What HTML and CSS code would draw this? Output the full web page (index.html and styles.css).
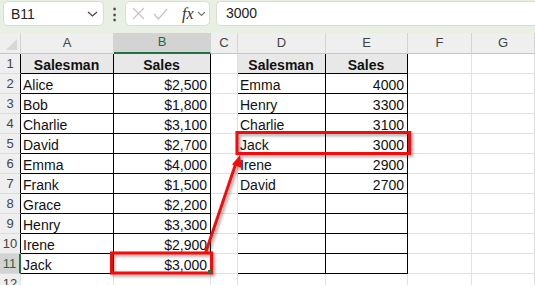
FILE: index.html
```html
<!DOCTYPE html>
<html>
<head>
<title>Sheet</title>
<link rel="stylesheet" href="styles.css">
</head>
<body>
<div class='app'>
  <div class='fbar'>
    <div class='namebox'>
      <span>B11</span>
      <svg class='chev' width='11' height='6' viewBox='0 0 11 6'><path d='M1 1l4.5 4 4.5-4' fill='none' stroke='#444' stroke-width='1.2'/></svg>
    </div>
    <div class='dots'>&#8942;</div>
    <div class='fxbox'>
      <svg width='13' height='13' viewBox='0 0 13 13'><path d='M1 1l11 11M12 1L1 12' stroke='#c4c4c4' stroke-width='1.2' fill='none'/></svg>
      <svg width='15' height='12' viewBox='0 0 15 12'><path d='M1 6l4.5 5L14 1' stroke='#c4c4c4' stroke-width='1.2' fill='none'/></svg>
      <span class='fx'>fx</span>
      <svg width='9' height='6' viewBox='0 0 9 6'><path d='M1 1l3.5 3.5L8 1' fill='none' stroke='#777' stroke-width='1.1'/></svg>
    </div>
    <div class='finput'>3000</div>
  </div>

  <table class='sheet'>
    <colgroup>
      <col style='width:21px'><col style='width:93px'><col style='width:97px'><col style='width:27px'>
      <col style='width:88px'><col style='width:82px'><col style='width:64px'><col style='width:63px'>
    </colgroup>
    <tr class='colhdr'>
      <th class='corner'><span class='tri'></span></th><th>A</th><th class='sel'>B</th><th>C</th><th>D</th><th>E</th><th>F</th><th>G</th>
    </tr>
    <tr>
      <th class='rh kr'>1</th><td class='k hd'>Salesman</td><td class='k hd'>Sales</td><td class='kr'></td><td class='k hd'>Salesman</td><td class='k hd'>Sales</td><td></td><td></td>
    </tr>
    <tr>
      <th class='rh kr'>2</th><td class='k'>Alice</td><td class='k num'>$2,500</td><td class='kr'></td><td class='k'>Emma</td><td class='k num'>4000</td><td></td><td></td>
    </tr>
    <tr>
      <th class='rh kr'>3</th><td class='k'>Bob</td><td class='k num'>$1,800</td><td class='kr'></td><td class='k'>Henry</td><td class='k num'>3300</td><td></td><td></td>
    </tr>
    <tr>
      <th class='rh kr'>4</th><td class='k'>Charlie</td><td class='k num'>$3,100</td><td class='kr'></td><td class='k'>Charlie</td><td class='k num'>3100</td><td></td><td></td>
    </tr>
    <tr>
      <th class='rh kr'>5</th><td class='k'>David</td><td class='k num'>$2,700</td><td class='kr'></td><td class='k'>Jack</td><td class='k num'>3000</td><td></td><td></td>
    </tr>
    <tr>
      <th class='rh kr'>6</th><td class='k'>Emma</td><td class='k num'>$4,000</td><td class='kr'></td><td class='k'>Irene</td><td class='k num'>2900</td><td></td><td></td>
    </tr>
    <tr>
      <th class='rh kr'>7</th><td class='k'>Frank</td><td class='k num'>$1,500</td><td class='kr'></td><td class='k'>David</td><td class='k num'>2700</td><td></td><td></td>
    </tr>
    <tr>
      <th class='rh kr'>8</th><td class='k'>Grace</td><td class='k num'>$2,200</td><td class='kr'></td><td class='k'></td><td class='k'></td><td></td><td></td>
    </tr>
    <tr>
      <th class='rh kr'>9</th><td class='k'>Henry</td><td class='k num'>$3,300</td><td class='kr'></td><td class='k'></td><td class='k'></td><td></td><td></td>
    </tr>
    <tr>
      <th class='rh kr'>10</th><td class='k'>Irene</td><td class='k num'>$2,900</td><td class='kr'></td><td class='k'></td><td class='k'></td><td></td><td></td>
    </tr>
    <tr>
      <th class='rh rsel'>11</th><td class='k'>Jack</td><td class='k num'>$3,000</td><td class='kr'></td><td class='k'></td><td class='k'></td><td></td><td></td>
    </tr>
    <tr>
      <th class='rh'>12</th><td></td><td></td><td></td><td></td><td></td><td></td><td></td>
    </tr>
  </table>

  <!-- callout boxes and arrow drawn over the grid -->
  <svg class='marks' width='535' height='285' viewBox='0 0 535 285'>
    <defs>
      <filter id='sh' x='-10%' y='-10%' width='130%' height='140%'>
        <feDropShadow dx='2' dy='2' stdDeviation='1.5' flood-color='#000' flood-opacity='0.35'/>
      </filter>
    </defs>
    <g filter='url(#sh)' fill='none' stroke='#f20d0d' stroke-width='3'>
      <rect x='111.5' y='253' width='100' height='20'/>
      <rect x='237' y='132.5' width='172.5' height='21'/>
      <path d='M205.5 253L236 163'/>
      <path d='M240 155l2 13-10-3.5z' fill='#f20d0d' stroke='none'/>
    </g>
    <rect x='208' y='270' width='3' height='3' fill='#217346'/>
  </svg>
</div>
</body>
</html>
```

FILE: styles.css
```css
*, body {
  margin: 0;
  padding: 0;
  box-sizing: border-box;
}
body {
  font-family: "Liberation Sans", Arial, sans-serif;
  background: #fff;
}
.app {
  position: relative;
  width: 535px;
  height: 285px;
  overflow: hidden;
}
.fbar {
  display: flex;
  align-items: flex-start;
  height: 33px;
  padding: 1px 0 0 3px;
  background: #e8efe3;
}
.namebox {
  display: flex;
  align-items: center;
  justify-content: space-between;
  width: 101px;
  height: 25px;
  padding: 0 5px 0 7px;
  background: #fff;
  border: 1px solid #d9ddd6;
  border-radius: 5px;
  font-size: 14px;
  color: #222;
}
.chev {
  margin-top: 1px;
}
.dots {
  width: 21px;
  text-align: center;
  font-size: 15px;
  font-weight: bold;
  line-height: 25px;
  color: #444;
}
.fxbox {
  display: flex;
  align-items: center;
  gap: 8px;
  width: 85px;
  height: 25px;
  padding: 0 3px 0 6px;
  background: #fff;
  border: 1px solid #d9ddd6;
  border-radius: 5px;
}
.fx {
  font-family: "Liberation Serif", serif;
  font-style: italic;
  font-size: 16px;
  color: #333;
  margin-left: 6px;
  margin-right: -5px;
}
.finput {
  flex: 1;
  height: 25px;
  margin-left: 6px;
  padding-left: 9px;
  background: #fff;
  border: 1px solid #d9ddd6;
  border-right: none;
  border-radius: 5px 0 0 5px;
  font-size: 14px;
  line-height: 23px;
  color: #222;
}
.sheet {
  border-collapse: separate;
  border-spacing: 0;
  table-layout: fixed;
  width: 535px;
  font-size: 14px;
  color: #111;
}
.sheet td, .sheet th {
  height: 20px;
  border-right: 1px solid #e1e1e1;
  border-bottom: 1px solid #e1e1e1;
  white-space: nowrap;
  overflow: hidden;
}
.sheet td {
  padding: 0 3px 0 2px;
  line-height: 16px;
  vertical-align: bottom;
}
.colhdr th {
  height: 20px;
  background: #efefef;
  border-right: 1px solid #d4d4d4;
  border-bottom: 1px solid #c6c6c6;
  font-weight: normal;
  font-size: 13px;
  color: #444;
  line-height: 18px;
  vertical-align: bottom;
  padding-bottom: 1px;
}
.colhdr th.sel {
  background: #d3d3d3;
  color: #1e6b3e;
  border-bottom: 2px solid #217346;
}
.corner {
  position: relative;
}
.tri {
  position: absolute;
  right: 3px;
  bottom: 3px;
  width: 0;
  height: 0;
  border-left: 11px solid transparent;
  border-bottom: 11px solid #d6d6d6;
}
.rh {
  background: #efefef;
  font-weight: normal;
  font-size: 13px;
  color: #444;
  text-align: center;
  line-height: 18px;
  vertical-align: bottom;
  border-bottom-color: #dcdcdc !important;
}
.rsel {
  background: #d3d3d3;
  color: #1e6b3e;
  border-right: 2px solid #217346 !important;
}
.k {
  border-right: 1px solid #000 !important;
  border-bottom: 1px solid #000 !important;
}
.kr, .sheet th.kr {
  border-right: 1px solid #000;
}
.hd {
  background: #e8e8e8;
  font-weight: bold;
  text-align: center;
}
.num {
  text-align: right;
}
.marks {
  position: absolute;
  left: 0;
  top: 0;
  pointer-events: none;
}
```
